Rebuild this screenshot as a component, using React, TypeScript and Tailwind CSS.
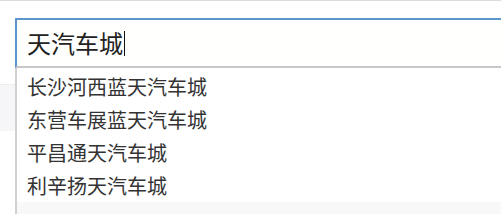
const SUGGESTIONS = ['长沙河西蓝天汽车城', '东营车展蓝天汽车城', '平昌通天汽车城', '利辛扬天汽车城'];

const cjk = { fontFamily: '"Microsoft YaHei", "Noto Sans CJK SC", sans-serif' };

export default function App() {
  return (
    <div className="h-[214px] w-[501px] overflow-hidden border-t border-[#dcdcdc] bg-white" style={cjk}>
      <div className="flex pt-[17px]">
        {/* page behind the dropdown */}
        <div className="flex w-[15px] shrink-0 flex-col pt-[66px]">
          <div className="h-[1px] bg-[#ececec]" />
          <div className="h-[46px] bg-[#f6f6f8]" />
        </div>

        <div className="flex min-w-0 flex-1 flex-col">
          <div className="flex h-[50px] items-center border-t-2 border-l-2 border-b-2 border-t-[#5b95cc] border-l-[#5b95cc] border-b-[#c8c8c8] bg-[#fffffd] pl-[10px]">
            <span className="text-[24px] leading-none text-[#222]">天汽车城</span>
            <span className="ml-[1px] h-[25px] w-[1px] bg-[#111]" />
          </div>

          <ul className="flex h-[146px] flex-col border-l-2 border-[#d0d0d0] pt-[2px]">
            {SUGGESTIONS.map((s) => (
              <li key={s} className="flex h-[33px] shrink-0 items-center pl-[10px] text-[20px] leading-none text-[#333]">
                {s}
              </li>
            ))}
            <li className="mt-auto h-[13px] bg-[#f8f8f8]" />
          </ul>
        </div>
      </div>
    </div>
  );
}
